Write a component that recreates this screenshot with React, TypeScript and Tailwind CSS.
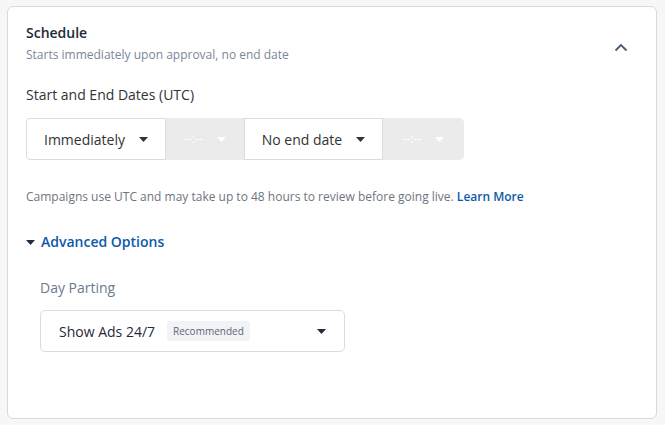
import React from "react";

function Caret({ className = "" }: { className?: string }) {
  return (
    <svg width="9" height="5" viewBox="0 0 9 5" className={className}>
      <path d="M0 0 L9 0 L4.5 5 Z" fill="currentColor" />
    </svg>
  );
}

function ChevronUp() {
  return (
    <svg width="14" height="9" viewBox="0 0 14 9">
      <path d="M1.5 7.5 L7 2 L12.5 7.5" fill="none" stroke="#4a5a74" strokeWidth="1.8" />
    </svg>
  );
}

export default function App() {
  return (
    <div
      className="w-[665px] h-[425px] bg-[#f7f7f7] pt-[6px] pl-[7px]"
      style={{ fontFamily: '"Open Sans", "Noto Sans", sans-serif' }}
    >
      <div className="w-[650px] h-[413px] bg-white border border-[#d9d9d9] rounded-[6px] pl-[18px] pt-[16px]">
        <div className="flex items-start justify-between pr-[28px]">
          <div>
            <div className="text-[14px] leading-[20px] font-semibold text-[#1d2b3a]">Schedule</div>
            <div className="text-[12px] leading-[18px] text-[#7a8799] mt-[3px]">
              Starts immediately upon approval, no end date
            </div>
          </div>
          <div className="mt-[20px]">
            <ChevronUp />
          </div>
        </div>

        <div className="mt-[21px] text-[14px] leading-[20px] text-[#333]">Start and End Dates (UTC)</div>

        <div className="mt-[13px] flex h-[42px] w-[438px]">
          <div className="w-[140px] flex items-center justify-center gap-[14px] border border-[#dcdcdc] rounded-l-[4px] bg-white text-[14px] text-[#333]">
            <span>Immediately</span>
            <Caret className="text-[#333]" />
          </div>
          <div className="w-[78px] flex items-center justify-center gap-[14px] bg-[#ebebeb] text-[#fff] text-[12px]">
            <span>--:--</span>
            <Caret className="text-[#fff]" />
          </div>
          <div className="w-[139px] flex items-center justify-center gap-[14px] border border-[#dcdcdc] bg-white text-[14px] text-[#333]">
            <span>No end date</span>
            <Caret className="text-[#333]" />
          </div>
          <div className="w-[81px] flex items-center justify-center gap-[14px] bg-[#ebebeb] rounded-r-[5px] text-[#fff] text-[12px]">
            <span>--:--</span>
            <Caret className="text-[#fff]" />
          </div>
        </div>

        <div className="mt-[28px] text-[12px] leading-[18px] text-[#6e7480]">
          Campaigns use UTC and may take up to 48 hours to review before going live.{" "}
          <span className="font-semibold text-[#0b5aa8]">Learn More</span>
        </div>

        <div className="mt-[26px] flex items-center gap-[6px] text-[#0b5aa8]">
          <Caret className="text-[#1f2d3d]" />
          <span className="text-[14px] leading-[20px] font-semibold">Advanced Options</span>
        </div>

        <div className="pl-[14px]">
          <div className="mt-[26px] text-[14px] leading-[20px] text-[#6b7a8f]">Day Parting</div>
          <div className="mt-[12px] w-[305px] h-[42px] border border-[#dcdcdc] rounded-[5px] flex items-center pl-[18px] pr-[18px]">
            <span className="text-[14px] text-[#1f2937]">Show Ads 24/7</span>
            <span className="ml-[12px] h-[20px] px-[6px] flex items-center bg-[#f1f3f6] rounded-[3px] text-[10px] text-[#5c6675]">
              Recommended
            </span>
            <Caret className="ml-auto text-[#1f2d3d]" />
          </div>
        </div>
      </div>
    </div>
  );
}
